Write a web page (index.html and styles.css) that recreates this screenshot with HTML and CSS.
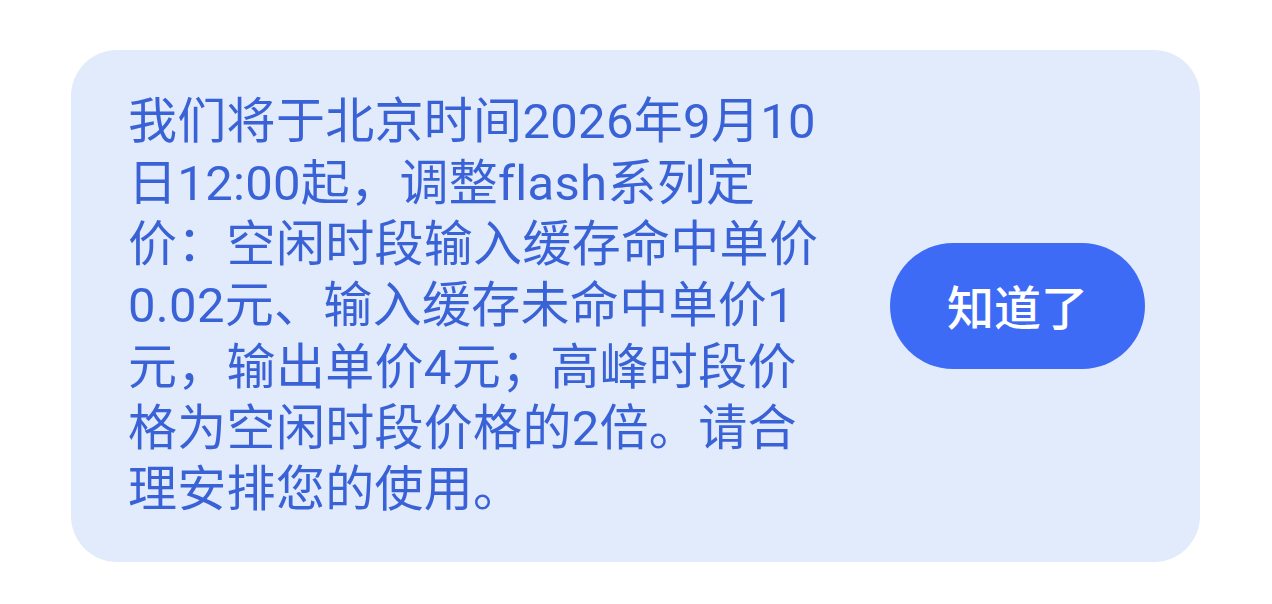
FILE: index.html
```html
<!DOCTYPE html>
<html lang="zh-CN">
<head>
    <meta charset="UTF-8" />
    <meta name="viewport" content="width=device-width, initial-scale=1.0"/>
    <title>价格调整通知</title>
    <link rel="stylesheet" href="styles.css">
</head>
<body>
<div class="notice">
    <p class="notice-text">我们将于北京时间2026年9月10日12:00起，调整flash系列定价：空闲时段输入缓存命中单价0.02元、输入缓存未命中单价1元，输出单价4元；高峰时段价格为空闲时段价格的2倍。请合理安排您的使用。</p>
    <button type="button" class="notice-btn">知道了</button>
</div>
</body>
</html>
```

FILE: styles.css
```css
body {
    margin: 0;
    padding: 50px 72px 42px 71px;
    background-color: #ffffff;
    font-family: Roboto, "Noto Sans CJK SC", sans-serif;
}

.notice {
    height: 512px;
    box-sizing: border-box;
    display: flex;
    align-items: center;
    justify-content: space-between;
    padding: 0 55px 0 57px;
    background-color: #e2ebfc;
    border-radius: 46px;
}

.notice-text {
    width: 700px;
    margin: 0;
    font-size: 49px;
    line-height: 61.3px;
    letter-spacing: 0.3px;
    color: #3a62d7;
}

.notice-btn {
    width: 255px;
    height: 126px;
    padding: 0 0 4px;
    border: none;
    border-radius: 63px;
    background-color: #3d6bf6;
    color: #ffffff;
    font-family: "Noto Sans CJK SC", sans-serif;
    font-size: 47px;
    font-weight: 500;
    cursor: pointer;
}
```
